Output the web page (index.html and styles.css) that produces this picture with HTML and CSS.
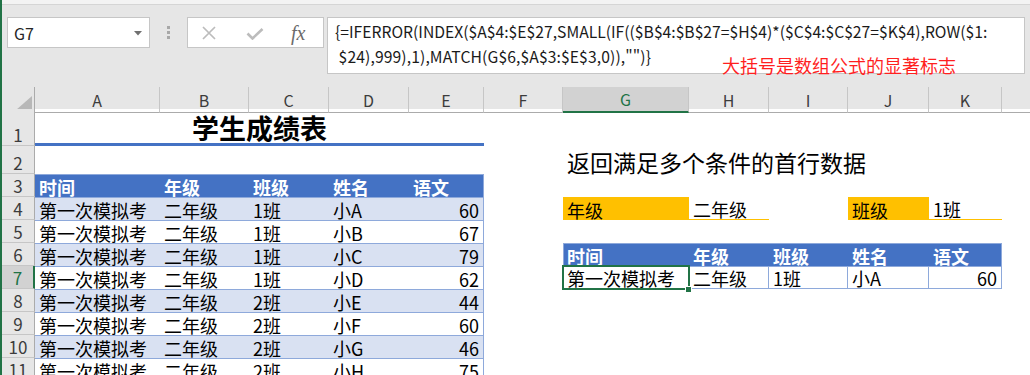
FILE: index.html
```html
<!DOCTYPE html>
<html lang="zh-CN">
<head>
<meta charset="utf-8">
<title>学生成绩表</title>
<link rel="stylesheet" href="styles.css">
</head>
<body>
<div class="app">
  <div class="top">
    <div class="strip"></div>
    <div class="fbar">
      <div class="namebox"><span>G7</span><svg class="dd" width="8" height="5" viewBox="0 0 8 5"><polygon points="0,0 8,0 4,4.5" fill="#707070"/></svg></div>
      <div class="grip"><i></i><i></i><i></i></div>
      <div class="btns">
        <svg class="ic-x" width="14" height="14" viewBox="0 0 14 14"><path d="M1 1L13 13M13 1L1 13" stroke="#bcbcbc" stroke-width="1.7" fill="none"/></svg>
        <svg class="ic-ok" width="18" height="12" viewBox="0 0 18 12"><path d="M1.5 5.5L6.5 10.5L16.5 1" stroke="#bcbcbc" stroke-width="2.6" fill="none"/></svg>
        <span class="fx">fx</span>
      </div>
      <div class="formula"><div class="fl">{=IFERROR(INDEX($A$4:$E$27,SMALL(IF(($B$4:$B$27=$H$4)*($C$4:$C$27=$K$4),ROW($1:</div><div class="fl l2"> $24),999),1),MATCH(G$6,$A$3:$E$3,0)),"")}</div></div>
    </div>
    <div class="note">大括号是数组公式的显著标志</div>
  </div>

  <div class="sheet">
    <div class="row hdr">
      <div class="corner"><svg width="16" height="14" viewBox="0 0 16 14"><polygon points="16,0 16,14 0,14" fill="#b8b8b8"/></svg></div>
      <div class="ch">A</div><div class="ch">B</div><div class="ch">C</div><div class="ch">D</div><div class="ch">E</div><div class="ch">F</div><div class="ch sel">G</div><div class="ch">H</div><div class="ch">I</div><div class="ch">J</div><div class="ch">K</div><div class="ch end"></div>
    </div>

    <div class="row r1">
      <div class="rh">1</div>
      <div class="c title">学生成绩表</div>
    </div>

    <div class="row r2">
      <div class="rh">2</div>
      <div></div><div></div><div></div><div></div><div></div><div></div>
      <div class="c sub">返回满足多个条件的首行数据</div>
    </div>

    <div class="row">
      <div class="rh">3</div>
      <div class="c th">时间</div><div class="c th">年级</div><div class="c th">班级</div><div class="c th">姓名</div><div class="c th e">语文</div>
    </div>

    <div class="row">
      <div class="rh">4</div>
      <div class="c t band">第一次模拟考</div><div class="c t band">二年级</div><div class="c t band">1班</div><div class="c t band">小A</div><div class="c t band e num">60</div>
      <div></div>
      <div class="c crit">年级</div><div class="c critv">二年级</div><div></div><div class="c crit">班级</div><div class="c critv">1班</div>
    </div>

    <div class="row">
      <div class="rh">5</div>
      <div class="c t">第一次模拟考</div><div class="c t">二年级</div><div class="c t">1班</div><div class="c t">小B</div><div class="c t e num">67</div>
    </div>

    <div class="row">
      <div class="rh">6</div>
      <div class="c t band">第一次模拟考</div><div class="c t band">二年级</div><div class="c t band">1班</div><div class="c t band">小C</div><div class="c t band e num">79</div>
      <div></div>
      <div class="c rth first">时间</div><div class="c rth">年级</div><div class="c rth">班级</div><div class="c rth">姓名</div><div class="c rth last">语文</div>
    </div>

    <div class="row">
      <div class="rh sel">7</div>
      <div class="c t">第一次模拟考</div><div class="c t">二年级</div><div class="c t">1班</div><div class="c t">小D</div><div class="c t e num">62</div>
      <div></div>
      <div class="c rtd first active">第一次模拟考<span class="handle"></span></div><div class="c rtd">二年级</div><div class="c rtd">1班</div><div class="c rtd">小A</div><div class="c rtd num">60</div>
    </div>

    <div class="row">
      <div class="rh">8</div>
      <div class="c t band">第一次模拟考</div><div class="c t band">二年级</div><div class="c t band">2班</div><div class="c t band">小E</div><div class="c t band e num">44</div>
    </div>

    <div class="row">
      <div class="rh">9</div>
      <div class="c t">第一次模拟考</div><div class="c t">二年级</div><div class="c t">2班</div><div class="c t">小F</div><div class="c t e num">60</div>
    </div>

    <div class="row">
      <div class="rh">10</div>
      <div class="c t band">第一次模拟考</div><div class="c t band">二年级</div><div class="c t band">2班</div><div class="c t band">小G</div><div class="c t band e num">46</div>
    </div>

    <div class="row">
      <div class="rh">11</div>
      <div class="c t">第一次模拟考</div><div class="c t">二年级</div><div class="c t">2班</div><div class="c t">小H</div><div class="c t e num">75</div>
    </div>
  </div>
</div>
</body>
</html>
```

FILE: styles.css
```css
:root {
  --cols: 33px 125px 89px 80px 80px 75px 79px 126px 80px 79px 81px 73px 1fr;
  --tb: #8ea9db;
  --blue: #4472c4;
  --band: #d9e1f2;
  --yel: #ffc000;
  --green: #217346;
}
* { box-sizing: border-box; margin: 0; padding: 0; }
html, body { width: 1030px; height: 375px; overflow: hidden; }
body {
  background: #fff;
  font-family: "Noto Sans CJK SC", "Noto Sans", sans-serif;
  color: #000;
}
.app {
  height: 375px;
  border-left: 2px solid var(--green);
  display: flex;
  flex-direction: column;
}

/* formula bar */
.top { position: relative; height: 87px; flex: none; background: #e6e6e6; }
.strip { height: 5px; background: #f3f3f3; border-bottom: 1px solid #d5d5d5; }
.fbar { display: flex; align-items: flex-start; padding-top: 12px; }
.namebox {
  margin-left: 5px; width: 143px; height: 31px;
  background: #fff; border: 1px solid #c6c6c6;
  display: flex; align-items: center; justify-content: space-between;
  padding: 0 7px 0 6px;
  font-size: 16px; color: #262626;
}
.dd { margin-top: 1px; }
.grip {
  width: 37px; height: 31px;
  display: flex; flex-direction: column; align-items: center; justify-content: center; gap: 2px;
}
.grip i { display: block; width: 3px; height: 3px; background: #a8a8a8; }
.btns {
  width: 137px; height: 31px;
  background: #fff; border: 1px solid #c6c6c6;
  display: flex; align-items: center;
}
.ic-x { margin-left: 14px; }
.ic-ok { margin-left: 30px; margin-top: 2px; }
.fx {
  margin-left: 27px;
  font-family: "Liberation Serif", serif; font-style: italic;
  font-size: 20px; line-height: 1; color: #6b6b6b;
}
.formula {
  margin-left: 3px; width: 698px; height: 57px;
  background: #fff; border: 1px solid #c6c6c6;
  padding-left: 7px; padding-top: 1px;
  font-size: 15.7px; line-height: 25px; white-space: pre; color: #1a1a1a;
}
.formula .l2 { letter-spacing: 0.1px; }
.note {
  position: absolute; left: 720px; top: 56px;
  font-size: 18px; line-height: 1; color: #ff1f1f;
}

/* sheet */
.sheet { flex: 1; display: flex; flex-direction: column; overflow: hidden; background: #fff; }
.row { display: grid; grid-template-columns: var(--cols); height: 23px; flex: none; }
.hdr { height: 22px; background: #e6e6e6; }
.r1 { height: 37px; }
.r2 { height: 28px; }

.corner {
  border-right: 1px solid #ababab; border-bottom: 1px solid #ababab;
  display: flex; align-items: flex-end; justify-content: flex-end; padding: 0 2px 2px 0;
}
.ch {
  border-right: 1px solid #c6c6c6; border-bottom: 1px solid #ababab;
  display: flex; align-items: center; justify-content: center;
  font-size: 16px; color: #3c3c3c;
}
.ch.end { border-right: none; }
.ch.sel { background: #d2d2d2; border-bottom: 2px solid var(--green); color: var(--green); }

.rh {
  background: #e6e6e6;
  border-right: 1px solid #ababab; border-bottom: 1px solid #c6c6c6;
  display: flex; align-items: flex-end; justify-content: center;
  padding-bottom: 2px;
  font-size: 17px; line-height: 1; color: #3c3c3c;
}
.rh.sel { background: #d2d2d2; border-right: 2px solid var(--green); color: var(--green); }

.c {
  display: flex; align-items: flex-end;
  padding: 0 4px 1px;
  font-size: 18px; line-height: 1; white-space: nowrap;
}
.title {
  grid-column: span 5; justify-content: center;
  font-size: 27px; font-weight: bold;
  border-bottom: 3px solid var(--blue); padding-bottom: 2px;
}
.sub { font-size: 23px; margin-bottom: -1px; }

.th { background: var(--blue); color: #fff; font-weight: bold; border-top: 1px solid var(--tb); }
.t { border-top: 1px solid var(--tb); }
.band { background: var(--band); }
.e { border-right: 1px solid var(--tb); }
.num { justify-content: flex-end; }

.crit { background: var(--yel); }
.critv { border-bottom: 1px solid var(--yel); }

.rth { background: var(--blue); color: #fff; font-weight: bold; border-top: 1px solid var(--tb); }
.rth.last { border-right: 1px solid var(--tb); }
.rtd { border-top: 1px solid var(--tb); border-bottom: 1px solid var(--tb); border-right: 1px solid var(--tb); }
.first { border-left: 1px solid var(--tb); padding-left: 3px; }

.active { position: relative; }
.active::after {
  content: ""; position: absolute;
  left: -2px; top: -2px; right: -2px; bottom: -2px;
  border: 2px solid var(--green);
}
.handle {
  position: absolute; right: -4px; bottom: -5px; z-index: 2;
  width: 7px; height: 7px; background: var(--green); border: 1px solid #fff;
}
```
